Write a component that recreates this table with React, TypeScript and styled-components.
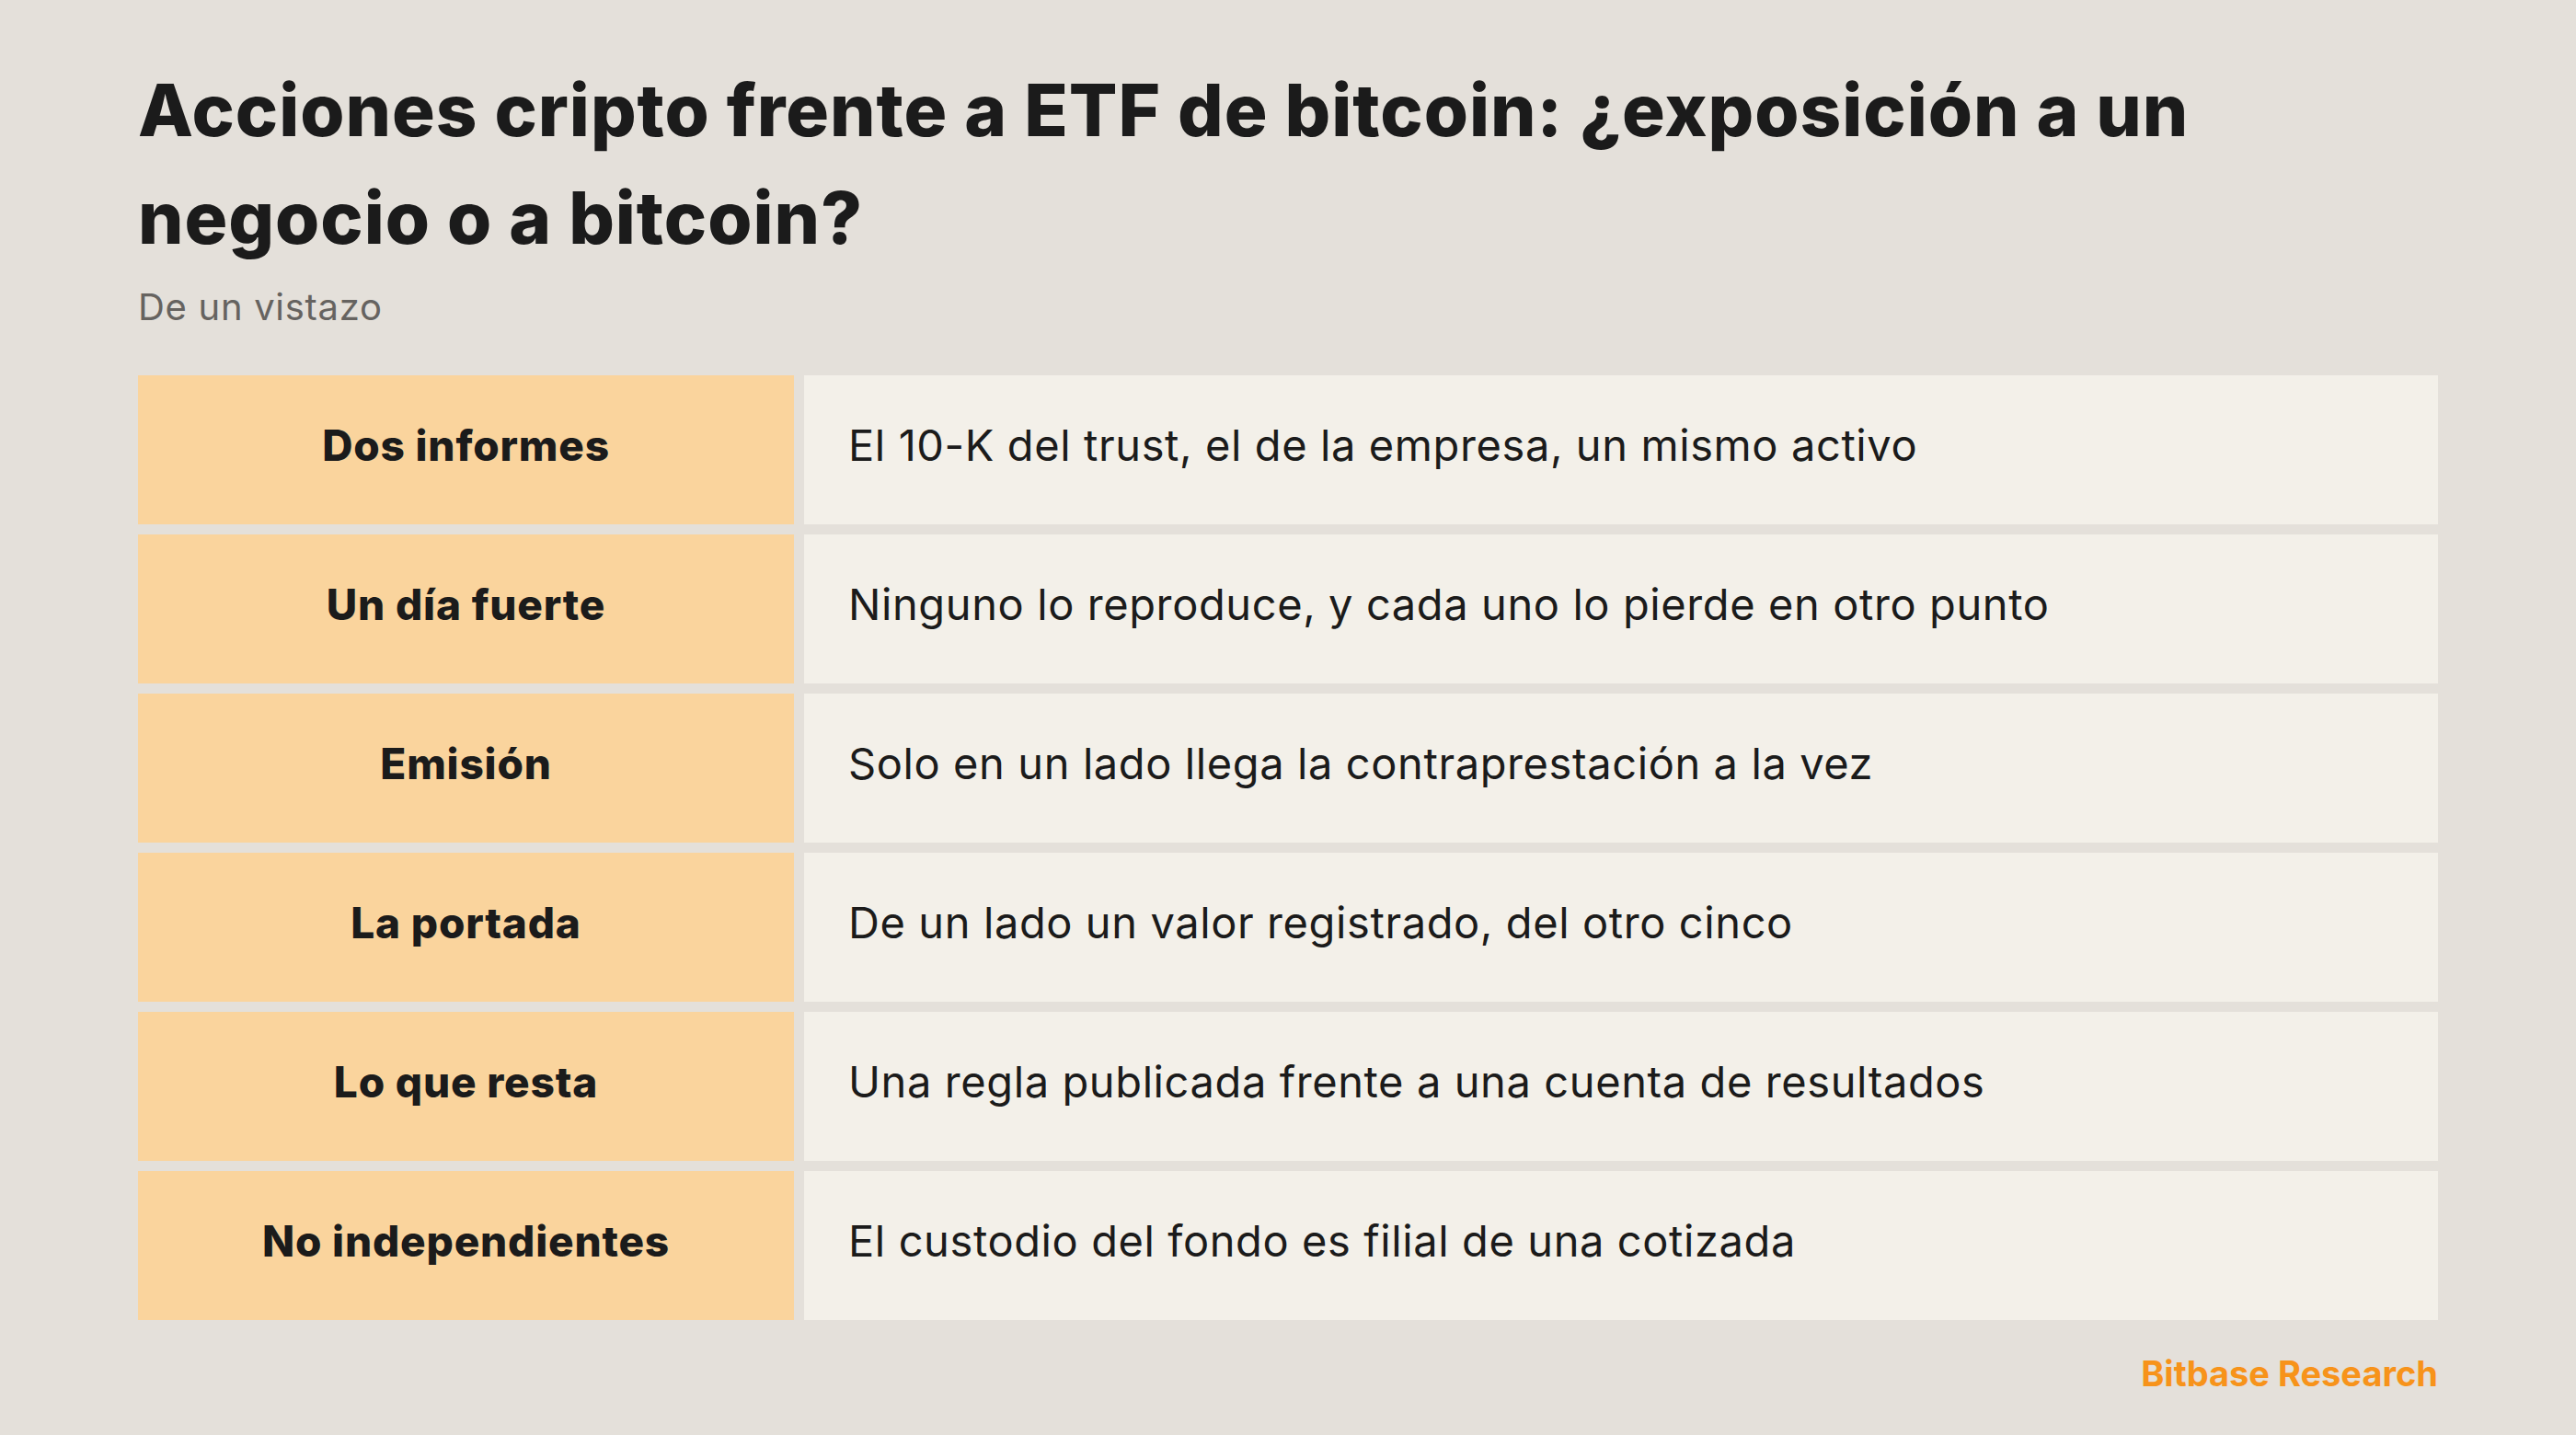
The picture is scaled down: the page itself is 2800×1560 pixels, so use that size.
import React from "react";
import styled, { createGlobalStyle } from "styled-components";

const GlobalStyle = createGlobalStyle`
  html, body {
    margin: 0;
    padding: 0;
    background: #e4e0da;
  }
  body {
    font-family: Inter, "Noto Sans", "Liberation Sans", sans-serif;
    color: #1b1b1b;
  }
  * { box-sizing: border-box; }
`;

const Page = styled.main`
  min-height: 100vh;
  padding: 61px 150px 40px;
  display: flex;
  flex-direction: column;
`;

const Title = styled.h1`
  margin: 0;
  font-size: 78px;
  line-height: 117px;
  font-weight: 800;
  letter-spacing: 0.95px;
  color: #1b1b1b;
`;

const Subtitle = styled.p`
  margin: 15px 0 0;
  font-size: 40px;
  line-height: 47px;
  font-weight: 400;
  letter-spacing: 0.7px;
  color: #666360;
`;

const Table = styled.div`
  margin-top: 51px;
  display: grid;
  grid-template-columns: 713px 1fr;
  grid-auto-rows: 162px;
  column-gap: 11px;
  row-gap: 11px;
`;

const Cell = styled.div<{ $kind: "label" | "value" }>`
  display: flex;
  align-items: center;
  padding-bottom: 10px;
  line-height: 56px;
  color: #1b1b1b;
  background: ${(p) => (p.$kind === "label" ? "#fad49d" : "#f3f0e9")};
  justify-content: ${(p) => (p.$kind === "label" ? "center" : "flex-start")};
  padding-left: ${(p) => (p.$kind === "label" ? "0" : "48px")};
  font-weight: ${(p) => (p.$kind === "label" ? 800 : 400)};
  font-size: ${(p) => (p.$kind === "label" ? "46px" : "47px")};
  letter-spacing: ${(p) => (p.$kind === "label" ? "0.8px" : "0.6px")};
`;

const Footer = styled.div`
  margin-top: 35px;
  text-align: right;
  font-size: 38px;
  line-height: 46px;
  font-weight: 700;
  color: #f7931a;
`;

const rows: [string, string][] = [
  ["Dos informes", "El 10-K del trust, el de la empresa, un mismo activo"],
  ["Un día fuerte", "Ninguno lo reproduce, y cada uno lo pierde en otro punto"],
  ["Emisión", "Solo en un lado llega la contraprestación a la vez"],
  ["La portada", "De un lado un valor registrado, del otro cinco"],
  ["Lo que resta", "Una regla publicada frente a una cuenta de resultados"],
  ["No independientes", "El custodio del fondo es filial de una cotizada"],
];

export default function App() {
  return (
    <>
      <GlobalStyle />
      <Page>
        <Title>
          Acciones cripto frente a ETF de bitcoin: ¿exposición a un negocio o a bitcoin?
        </Title>
        <Subtitle>De un vistazo</Subtitle>
        <Table>
          {rows.map(([label, value]) => (
            <React.Fragment key={label}>
              <Cell $kind="label">{label}</Cell>
              <Cell $kind="value">{value}</Cell>
            </React.Fragment>
          ))}
        </Table>
        <Footer>Bitbase Research</Footer>
      </Page>
    </>
  );
}
